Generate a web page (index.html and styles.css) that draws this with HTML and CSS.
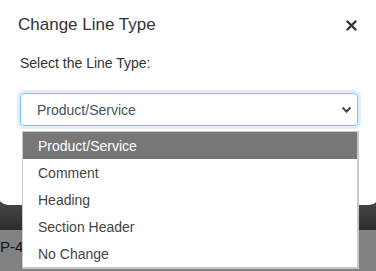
FILE: index.html
```html
<!DOCTYPE html>
<html lang="en">
<head>
    <meta charset="UTF-8">
    <title>Change Line Type</title>
    <link rel="stylesheet" href="styles.css">
</head>
<body>
<div class="page">
    <div class="modal">
        <div class="modal-header">
            <h4 class="modal-title">Change Line Type</h4>
            <span class="close">
                <svg width="11" height="11" viewBox="0 0 11 11"><path d="M1.5 1.5l8 8M9.5 1.5l-8 8" stroke="#333" stroke-width="2.4" stroke-linecap="round"/></svg>
            </span>
        </div>
        <div class="modal-body">
            <label class="field-label">Select the Line Type:</label>
            <div class="select">
                <span>Product/Service</span>
                <svg width="11" height="7" viewBox="0 0 11 7"><path d="M1.5 1.5l4 4 4-4" fill="none" stroke="#444" stroke-width="2"/></svg>
            </div>
        </div>
    </div>
    <div class="band-dark"></div>
    <div class="band-gray"><span class="row-code">P-4</span></div>

    <!--展开的下拉列表-->
    <ul class="options">
        <li class="selected">Product/Service</li>
        <li>Comment</li>
        <li>Heading</li>
        <li>Section Header</li>
        <li>No Change</li>
    </ul>
</div>
</body>
</html>
```

FILE: styles.css
```css
*{
    margin: 0;
    padding: 0;
    box-sizing: border-box;
}
body{
    font-family: "Liberation Sans", Arial, sans-serif;
    background-color: #828282;
    width: 376px;
    height: 271px;
    overflow: hidden;
}
.page{
    position: relative;
    height: 271px;
    background-color: #828282;
}
.modal{
    height: 205px;
    margin: 0 -3px 0 -2px;
    background-color: #fff;
    border-radius: 0 0 10px 10px;
    position: relative;
    z-index: 1;
}
.modal-header{
    display: flex;
    justify-content: space-between;
    align-items: center;
    padding: 12px 22px 0 20px;
    height: 38px;
}
.modal-title{
    font-size: 17px;
    font-weight: normal;
    color: #333;
}
.close{
    display: flex;
    margin-top: 1px;
}
.modal-body{
    padding: 17px 20px 0 22px;
}
.field-label{
    display: block;
    font-size: 14px;
    color: #333;
    height: 38px;
}
.select{
    display: flex;
    justify-content: space-between;
    align-items: center;
    width: 338px;
    height: 33px;
    padding: 0 5px 0 16px;
    border: 1px solid #80bdff;
    border-radius: 4px;
    box-shadow: 0 0 0 3px rgba(0,123,255,.12);
    font-size: 14px;
    color: #495057;
}
.band-dark{
    height: 33px;
    margin-top: -8px;
    padding-top: 8px;
    background: linear-gradient(#4a4a4a, #2e2e2e);
}
.band-gray{
    height: 33px;
    background-color: #828282;
    font-size: 15px;
    color: #111;
    padding-top: 8px;
}
.row-code{
    display: inline-block;
    width: 22px;
    overflow: hidden;
    white-space: nowrap;
}
.options{
    position: absolute;
    left: 22px;
    top: 131px;
    width: 337px;
    list-style: none;
    background-color: #fff;
    border: 1px solid #c8c8c8;
    border-right-width: 2px;
    border-bottom-width: 2px;
    z-index: 2;
}
.options li{
    height: 27px;
    line-height: 28px;
    padding-left: 15px;
    font-size: 14px;
    color: #444;
}
.options li.selected{
    background-color: #777;
    color: #fff;
}
```
